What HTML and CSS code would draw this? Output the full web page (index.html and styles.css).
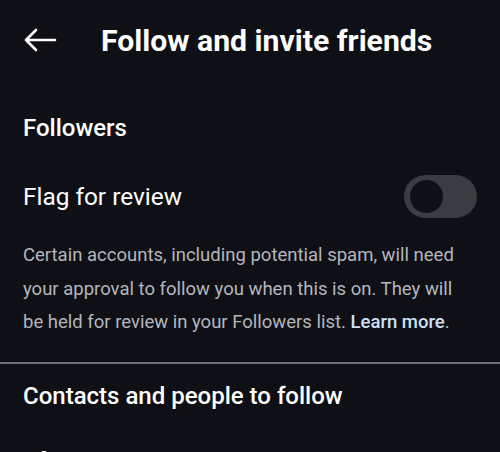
FILE: index.html
```html
<!DOCTYPE html>
<html lang="en">
  <head>
    <meta charset="UTF-8" />
    <title>Follow and invite friends</title>
    <link rel="stylesheet" href="styles.css">
  </head>
  <body>
    <header class="topbar">
      <div class="back">
        <svg width="34" height="24" viewBox="0 0 34 24">
          <path d="M32 12H3M13 2L3 12l10 10" fill="none" stroke="#fff" stroke-width="2.6" stroke-linecap="round" stroke-linejoin="round" />
        </svg>
      </div>
      <div class="titulo">Follow and invite friends</div>
    </header>

    <section class="secao">
      <div class="secao-titulo">Followers</div>
      <div class="linha">
        <div class="linha-texto">Flag for review</div>
        <div class="toggle"><div class="knob"></div></div>
      </div>
      <p class="descricao">
        Certain accounts, including potential spam, will need your approval to
        follow you when this is on. They will be held for review in your
        Followers list. <span class="link">Learn more</span>.
      </p>
    </section>

    <hr class="divisor" />

    <section class="secao">
      <div class="secao-titulo contatos">Contacts and people to follow</div>
      <div class="icone-parcial"></div>
    </section>
  </body>
</html>
```

FILE: styles.css
```css
body {
  margin: 0;
  background: #0e1016;
  color: #fff;
  font-family: Roboto, "Noto Sans", sans-serif;
  overflow: hidden;
}
.topbar {
  display: flex;
  align-items: center;
  height: 80px;
  padding: 0 23px;
}
.back {
  display: flex;
  width: 78px;
}
.titulo {
  font-size: 30.2px;
  font-weight: bold;
}
.secao {
  padding: 0 23px;
}
.secao-titulo {
  font-size: 24px;
  font-weight: 500;
  padding-top: 33px;
  line-height: 30px;
}
.linha {
  display: flex;
  align-items: center;
  justify-content: space-between;
  margin-top: 32px;
}
.linha-texto {
  font-size: 24.4px;
}
.toggle {
  width: 73px;
  height: 43px;
  border-radius: 22px;
  background: #3a3c41;
  display: flex;
  align-items: center;
  padding-left: 6px;
  box-sizing: border-box;
}
.knob {
  width: 33px;
  height: 33px;
  border-radius: 50%;
  background: #0e1016;
}
.descricao {
  margin: 21px 0 0;
  font-size: 18.5px;
  line-height: 33.5px;
  color: #b4b6bc;
  padding-right: 20px;
}
.link {
  color: #cde0f7;
  font-weight: 500;
}
.divisor {
  border: 0;
  border-top: 2px solid #6e6f75;
  margin: 22px 0 0;
}
.contatos {
  padding-top: 17px;
}
.icone-parcial {
  width: 8px;
  height: 8px;
  border-radius: 50%;
  background: #fff;
  margin: 40px 0 0 17px;
}
```
